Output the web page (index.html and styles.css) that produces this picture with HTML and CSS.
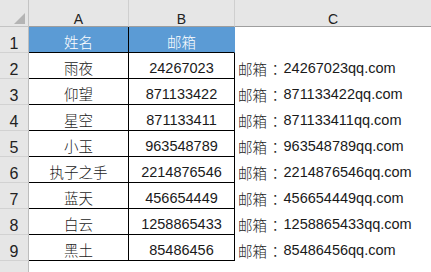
FILE: index.html
```html
<!DOCTYPE html>
<html lang="zh">
<head>
<meta charset="utf-8">
<link rel="stylesheet" href="styles.css">
</head>
<body>
<div class="sheet">
  <div class="corner"><span class="tri"></span></div>
  <div class="colhead">A</div>
  <div class="colhead">B</div>
  <div class="colhead last">C</div>

  <div class="rowhead">1</div>
  <div class="cell th">姓名</div>
  <div class="cell th b1">邮箱</div>
  <div class="cell c"></div>

  <div class="rowhead">2</div>
  <div class="cell td">雨夜</div>
  <div class="cell td">24267023</div>
  <div class="cell c">邮箱<span class="colon">：</span>24267023qq.com</div>

  <div class="rowhead">3</div>
  <div class="cell td">仰望</div>
  <div class="cell td">871133422</div>
  <div class="cell c">邮箱<span class="colon">：</span>871133422qq.com</div>

  <div class="rowhead">4</div>
  <div class="cell td">星空</div>
  <div class="cell td">871133411</div>
  <div class="cell c">邮箱<span class="colon">：</span>871133411qq.com</div>

  <div class="rowhead">5</div>
  <div class="cell td">小玉</div>
  <div class="cell td">963548789</div>
  <div class="cell c">邮箱<span class="colon">：</span>963548789qq.com</div>

  <div class="rowhead">6</div>
  <div class="cell td">执子之手</div>
  <div class="cell td">2214876546</div>
  <div class="cell c">邮箱<span class="colon">：</span>2214876546qq.com</div>

  <div class="rowhead">7</div>
  <div class="cell td">蓝天</div>
  <div class="cell td">456654449</div>
  <div class="cell c">邮箱<span class="colon">：</span>456654449qq.com</div>

  <div class="rowhead">8</div>
  <div class="cell td">白云</div>
  <div class="cell td">1258865433</div>
  <div class="cell c">邮箱<span class="colon">：</span>1258865433qq.com</div>

  <div class="rowhead">9</div>
  <div class="cell td">黑土</div>
  <div class="cell td">85486456</div>
  <div class="cell c">邮箱<span class="colon">：</span>85486456qq.com</div>

  <div class="rowhead blank"></div>
  <div class="cell"></div>
  <div class="cell"></div>
  <div class="cell"></div>
</div>
</body>
</html>
```
FILE: styles.css
```css
html, body {
  margin: 0;
  padding: 0;
  background: #ffffff;
}
.sheet {
  display: grid;
  grid-template-columns: 29px 100px 106px 196px;
  grid-template-rows: 27px repeat(9, 26px) 11px;
  width: 431px;
  height: 272px;
  overflow: hidden;
  font-family: "Liberation Sans", "Noto Sans CJK SC", sans-serif;
  color: #1a1a1a;
}
.corner {
  position: relative;
  background: #e6e6e6;
  border-right: 1px solid #c4c4c4;
  border-bottom: 1px solid #c4c4c4;
}
.tri {
  position: absolute;
  right: 3px;
  bottom: 2px;
  width: 0;
  height: 0;
  border-left: 11px solid transparent;
  border-bottom: 11px solid #b4b4b4;
}
.colhead {
  background: #e6e6e6;
  border-right: 1px solid #cfcfcf;
  border-bottom: 1px solid #9e9e9e;
  display: flex;
  align-items: flex-end;
  justify-content: center;
  font-family: "Liberation Sans", sans-serif;
  font-size: 14px;
  line-height: 14px;
  padding-bottom: 0;
  color: #222;
}
.colhead.last {
  border-right: none;
}
.rowhead {
  background: #e6e6e6;
  border-right: 1px solid #bdbdbd;
  border-bottom: 1px solid #d2d2d2;
  display: flex;
  align-items: flex-end;
  justify-content: center;
  font-family: "Liberation Sans", sans-serif;
  font-size: 16px;
  line-height: 16px;
  padding-bottom: 0;
  color: #222;
}
.rowhead.blank {
  border-bottom: none;
}
.cell {
  display: flex;
  align-items: center;
  justify-content: center;
  font-size: 14.5px;
  font-weight: 300;
  white-space: nowrap;
  padding-top: 4px;
}
.th {
  background: #5b9bd5;
  color: #ffffff;
  border-right: 1px solid #000;
  border-bottom: 1px solid #000;
}
.th.b1 {
  border-right: 1px solid #5b9bd5;
}
.td {
  border-right: 1px solid #000;
  border-bottom: 1px solid #000;
}
.c {
  justify-content: flex-start;
  padding-left: 3px;
}
.colon {
  font-family: "Noto Sans CJK TC", sans-serif;
  padding: 0 1px;
}
```
